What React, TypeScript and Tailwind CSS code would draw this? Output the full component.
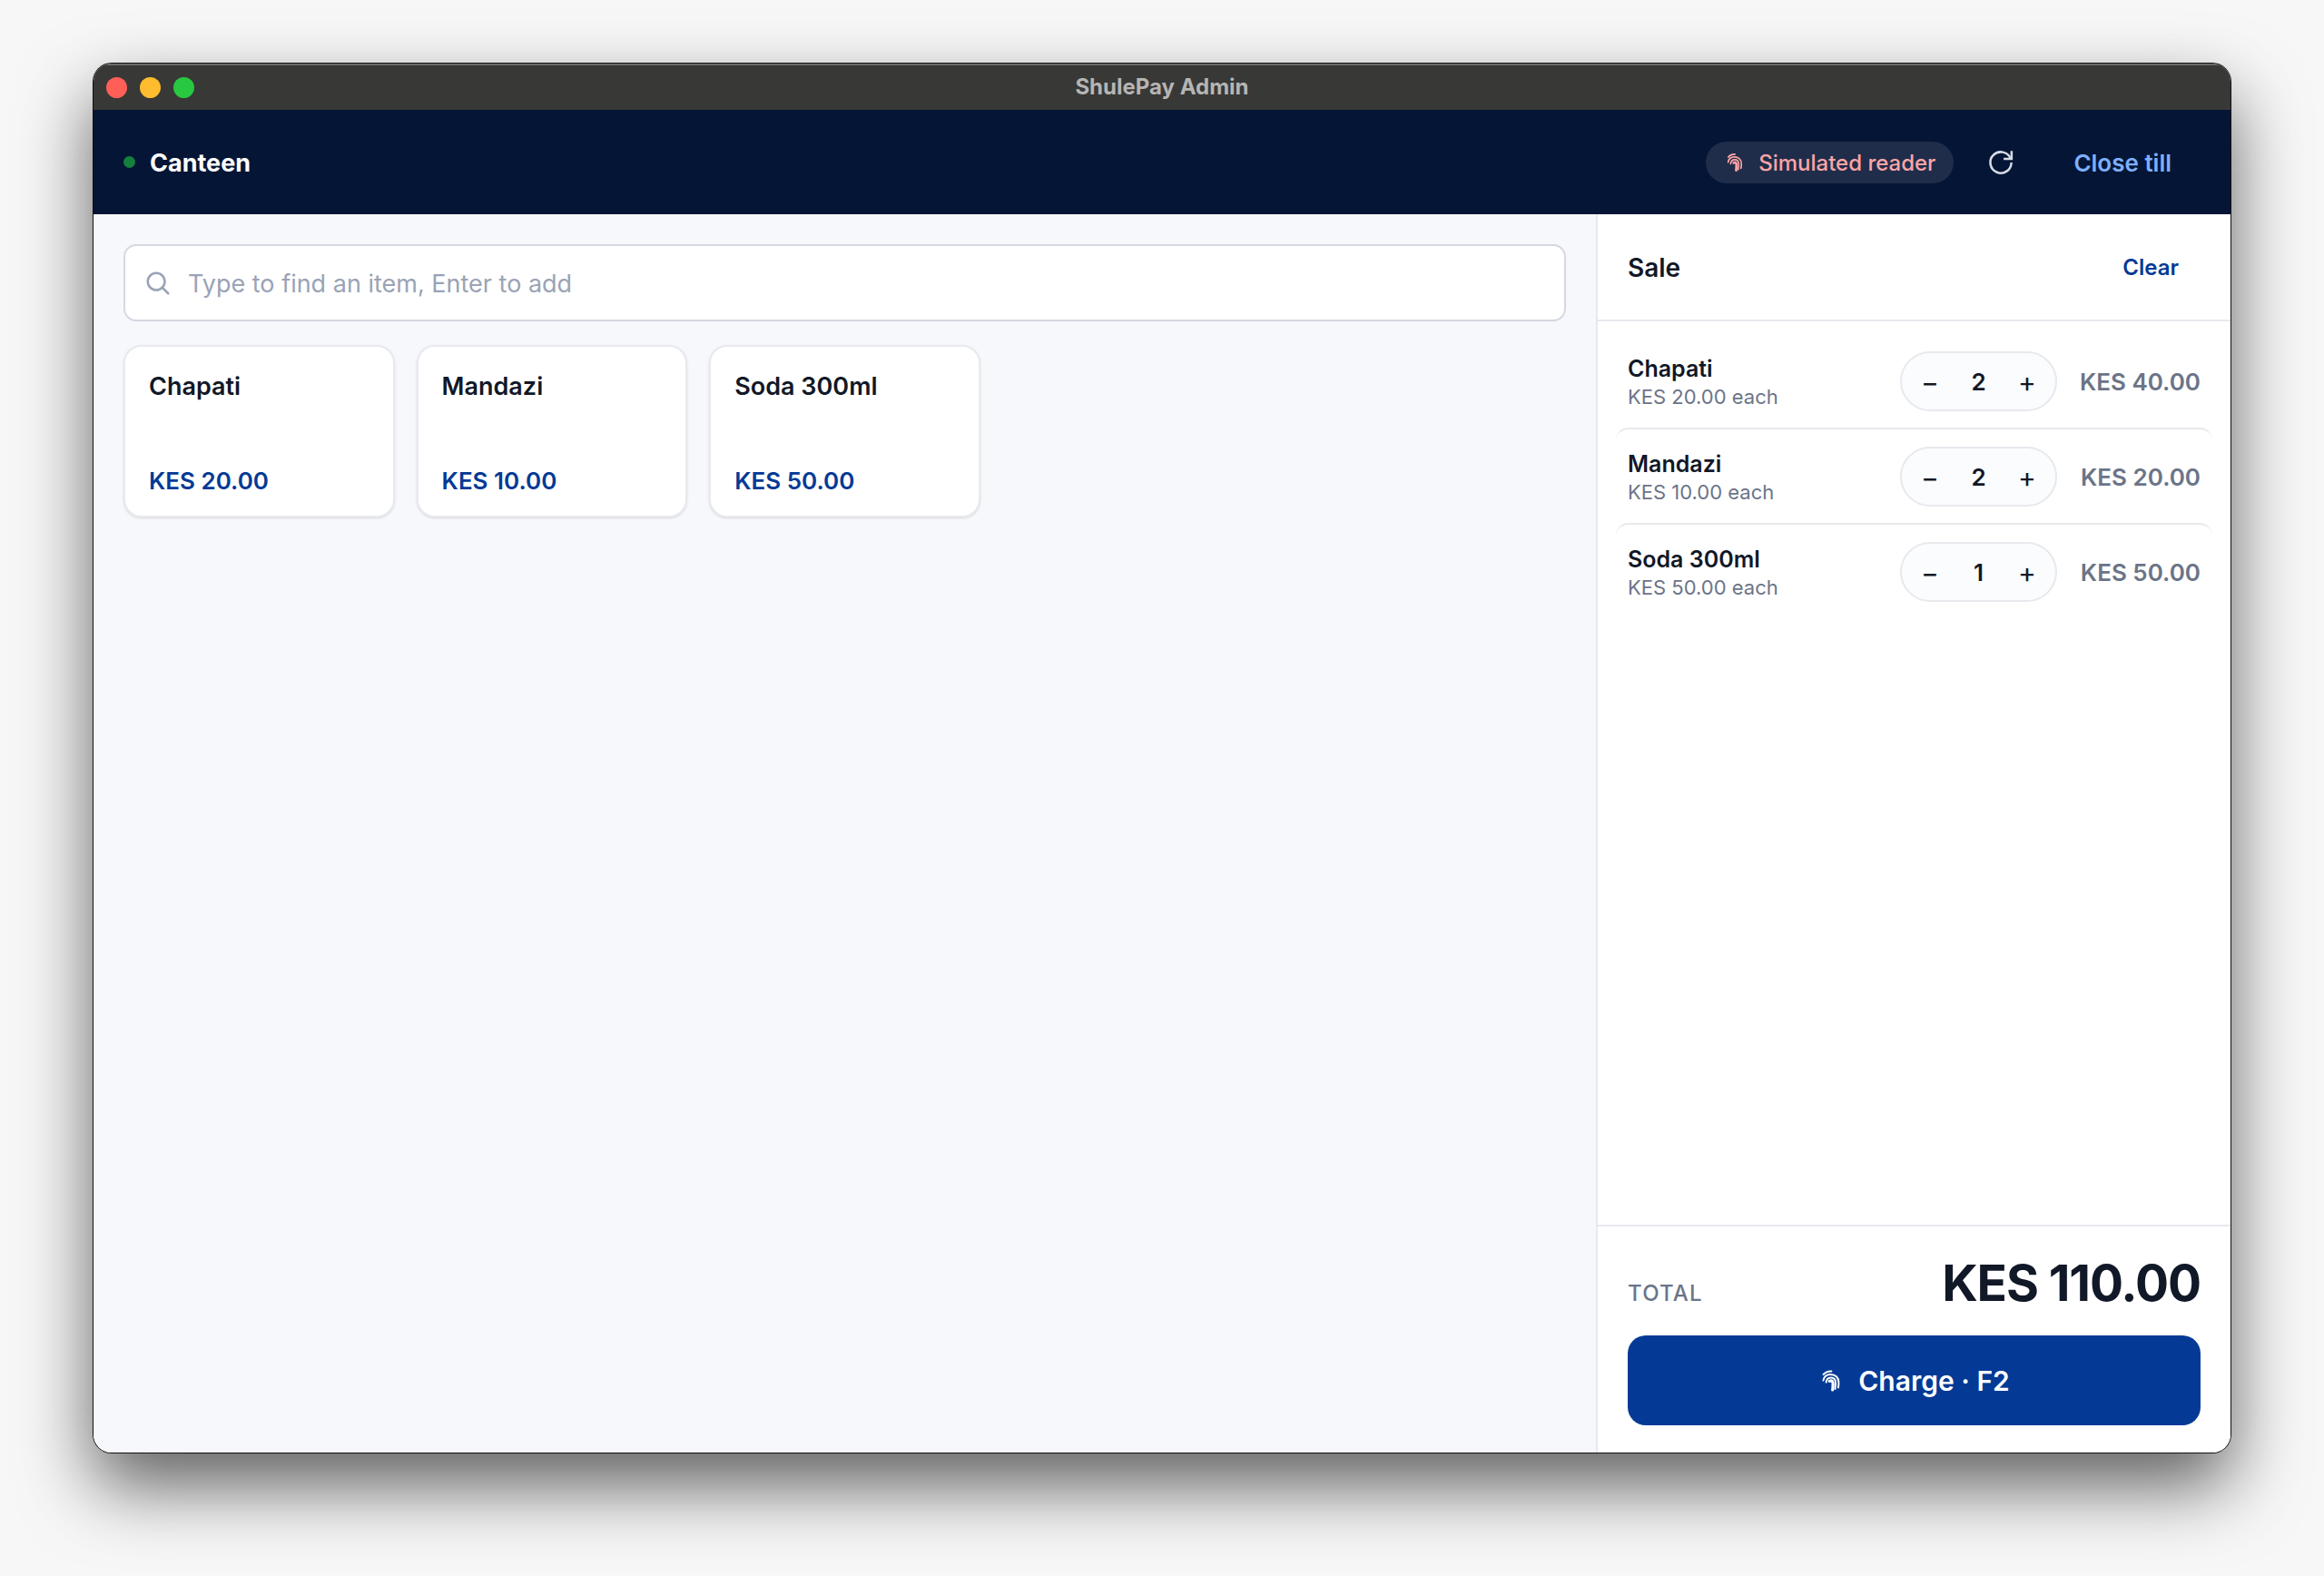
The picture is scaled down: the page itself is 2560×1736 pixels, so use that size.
import { useState } from 'react'
import type { SVGProps } from 'react'

type Item = { id: number; name: string; price: number }

const items: Item[] = [
  { id: 1, name: 'Chapati', price: 20 },
  { id: 2, name: 'Mandazi', price: 10 },
  { id: 3, name: 'Soda 300ml', price: 50 },
]

const kes = (n: number) => `KES ${n.toFixed(2)}`

function FingerprintIcon(props: SVGProps<SVGSVGElement>) {
  return (
    <svg viewBox="-4 -2 28 28" fill="none" stroke="currentColor" strokeLinecap="round" aria-hidden="true" {...props}>
      <path strokeWidth="2" d="M1.6 5C4 2.4 7 1.3 10.4 1.5" />
      <path strokeWidth="2" d="M1.4 11.6C2.2 7.2 5.4 4.9 9.4 4.9c5.2 0 9 3.4 9 8.8 0 2.2-.1 4-.5 5.7" />
      <path strokeWidth="2" d="M4.6 13.6C5 10.4 6.8 8.4 9.7 8.4c3.4 0 5.3 2.2 5.3 5.6 0 3-.1 5-.5 7" />
      <path strokeWidth="3.2" d="M8.4 12.4c2.4-1.4 3.7.2 3.7 2.8 0 2.6-.1 4.6-.4 6.8" />
    </svg>
  )
}

function SearchIcon(props: SVGProps<SVGSVGElement>) {
  return (
    <svg viewBox="0 0 24 24" fill="none" stroke="currentColor" strokeWidth="2" strokeLinecap="round" aria-hidden="true" {...props}>
      <circle cx="10.5" cy="10.5" r="7.5" />
      <path d="m21 21-5.2-5.2" />
    </svg>
  )
}

function RefreshIcon(props: SVGProps<SVGSVGElement>) {
  return (
    <svg viewBox="0 0 24 24" fill="none" stroke="currentColor" strokeWidth="1.9" aria-hidden="true" {...props}>
      <path d="M20.7 12A8.7 8.7 0 1 1 20 8.6" />
      <path d="M20.9 2.4v6.6h-6.6" />
    </svg>
  )
}

function TitleBar() {
  return (
    <div className="grid grid-cols-3 items-center h-[51px] px-[14px] bg-[#383836] border-t-2 border-[#6b6b69]">
      <div className="flex items-center gap-[14px]">
        <span className="size-[23px] rounded-full bg-[#ff5f57]" />
        <span className="size-[23px] rounded-full bg-[#febc2e]" />
        <span className="size-[23px] rounded-full bg-[#28c840]" />
      </div>
      <p className="pb-0.5 text-center text-[24px] leading-8 font-bold text-[#b5b5b4]">ShulePay Admin</p>
    </div>
  )
}

export default function App() {
  const [cart, setCart] = useState<Record<number, number>>({ 1: 2, 2: 2, 3: 1 })
  const [query, setQuery] = useState('')

  const change = (id: number, by: number) =>
    setCart((prev) => ({ ...prev, [id]: Math.max(0, (prev[id] || 0) + by) }))

  const shown = items.filter((i) => i.name.toLowerCase().includes(query.toLowerCase()))
  const lines = items.filter((i) => cart[i.id] > 0)
  const total = lines.reduce((sum, i) => sum + i.price * cart[i.id], 0)

  return (
    <div className="min-h-screen flex flex-col bg-[#f7f7f7] px-[103px] pt-[70px] pb-[136px] font-['Inter',sans-serif] text-[#111827]">
      <div className="flex-1 flex flex-col rounded-[20px] overflow-hidden bg-white shadow-[0_0_0_1px_#111111,0_36px_80px_rgba(0,0,0,0.62)]">
        <TitleBar />

        <header className="flex items-center justify-between h-[115px] px-[33px] bg-[#051535]">
          <div className="flex items-center gap-4">
            <span className="size-[13px] rounded-full bg-[#15803d]" />
            <h1 className="pt-0.5 text-[27px] leading-9 font-bold text-white">Canteen</h1>
          </div>
          <div className="flex items-center">
            <span className="flex items-center gap-[14px] h-[46px] px-5 rounded-full bg-[#1f2d4b] text-[#fca5a5]">
              <FingerprintIcon className="size-6" />
              <span className="pt-0.5 text-[24px] leading-8 font-medium">Simulated reader</span>
            </span>
            <button type="button" aria-label="Refresh" className="ml-5 p-4 text-[#d5dbe6]">
              <RefreshIcon className="size-8" />
            </button>
            <button type="button" className="ml-4 px-[32px] pt-[18px] pb-4 text-[26px] leading-9 font-semibold text-[#7db0ff]">
              Close till
            </button>
          </div>
        </header>

        <div className="flex-1 flex">
          <main className="flex-1 bg-[#f7f8fc] px-[33px] pt-[33px]">
            <label className="flex items-center gap-[18px] h-[85px] px-[21px] rounded-[14px] border-2 border-[#d5d8e2] bg-white text-[#9aa3b5]">
              <SearchIcon className="size-[30px]" />
              <input
                type="text"
                aria-label="Find an item"
                value={query}
                onChange={(e) => setQuery(e.target.value)}
                placeholder="Type to find an item, Enter to add"
                className="flex-1 pt-0.5 bg-transparent text-[27px] leading-9 text-[#111827] placeholder:text-[#9aa3b5] outline-none"
              />
            </label>

            <div className="mt-[26px] grid grid-cols-5 gap-6">
              {shown.map((item) => (
                <button
                  key={item.id}
                  type="button"
                  onClick={() => change(item.id, 1)}
                  className="flex flex-col justify-between items-start h-[190px] px-[26px] pt-[26px] pb-[22px] rounded-[20px] border-2 border-[#e8eaef] bg-white shadow-sm text-left"
                >
                  <span className="text-[27px] leading-9 font-semibold">{item.name}</span>
                  <span className="text-[26px] leading-8 font-semibold text-[#043a95]">{kes(item.price)}</span>
                </button>
              ))}
            </div>
          </main>

          <aside className="w-[699px] flex flex-col bg-white border-l-2 border-[#e7e9ed]">
            <div className="flex items-center justify-between h-[118px] px-[33px] border-b-2 border-[#e7e9ed]">
              <h2 className="pt-0.5 text-[28px] leading-9 font-semibold">Sale</h2>
              <button
                type="button"
                onClick={() => setCart({})}
                className="px-6 pt-[18px] pb-4 text-[24px] leading-8 font-semibold text-[#043a95]"
              >
                Clear
              </button>
            </div>

            <ul className="flex-1 px-5 pt-3">
              {lines.map((item) => (
                <li
                  key={item.id}
                  className="flex items-center h-[105px] px-[13px] rounded-[14px] border-t-2 border-[#e7e9ed] first:border-transparent"
                >
                  <div className="flex-1">
                    <p className="pt-0.5 text-[25px] leading-8 font-semibold">{item.name}</p>
                    <p className="text-[22px] leading-[30px] text-[#6b7488]">{kes(item.price)} each</p>
                  </div>
                  <div className="flex items-center justify-between w-[173px] h-[66px] rounded-full border-2 border-[#e7e9ed] bg-[#fbfcfe]">
                    <button
                      type="button"
                      aria-label={`Remove one ${item.name}`}
                      onClick={() => change(item.id, -1)}
                      className="w-[62px] pt-0.5 text-[30px] leading-9"
                    >
                      −
                    </button>
                    <span className="pt-0.5 text-[26px] leading-8 font-semibold">{cart[item.id]}</span>
                    <button
                      type="button"
                      aria-label={`Add one ${item.name}`}
                      onClick={() => change(item.id, 1)}
                      className="w-[62px] pt-0.5 text-[30px] leading-9"
                    >
                      +
                    </button>
                  </div>
                  <p className="w-[158px] pt-0.5 text-right text-[26px] leading-8 font-semibold text-[#6b7488]">
                    {kes(item.price * cart[item.id])}
                  </p>
                </li>
              ))}
            </ul>

            <div className="px-[33px] pt-[30px] pb-[30px] border-t-2 border-[#e7e9ed]">
              <div className="flex items-baseline justify-between">
                <span className="text-[24px] leading-8 font-medium tracking-wider text-[#6b7488]">TOTAL</span>
                <span className="text-[55px] leading-[64px] font-bold tracking-[-0.02em]">{kes(total)}</span>
              </div>
              <button
                type="button"
                className="mt-[26px] w-full h-[99px] flex items-center justify-center gap-4 rounded-[20px] bg-[#043a95] text-white"
              >
                <FingerprintIcon className="size-7" />
                <span className="text-[30px] leading-10 font-semibold">Charge · F2</span>
              </button>
            </div>
          </aside>
        </div>
      </div>
    </div>
  )
}
